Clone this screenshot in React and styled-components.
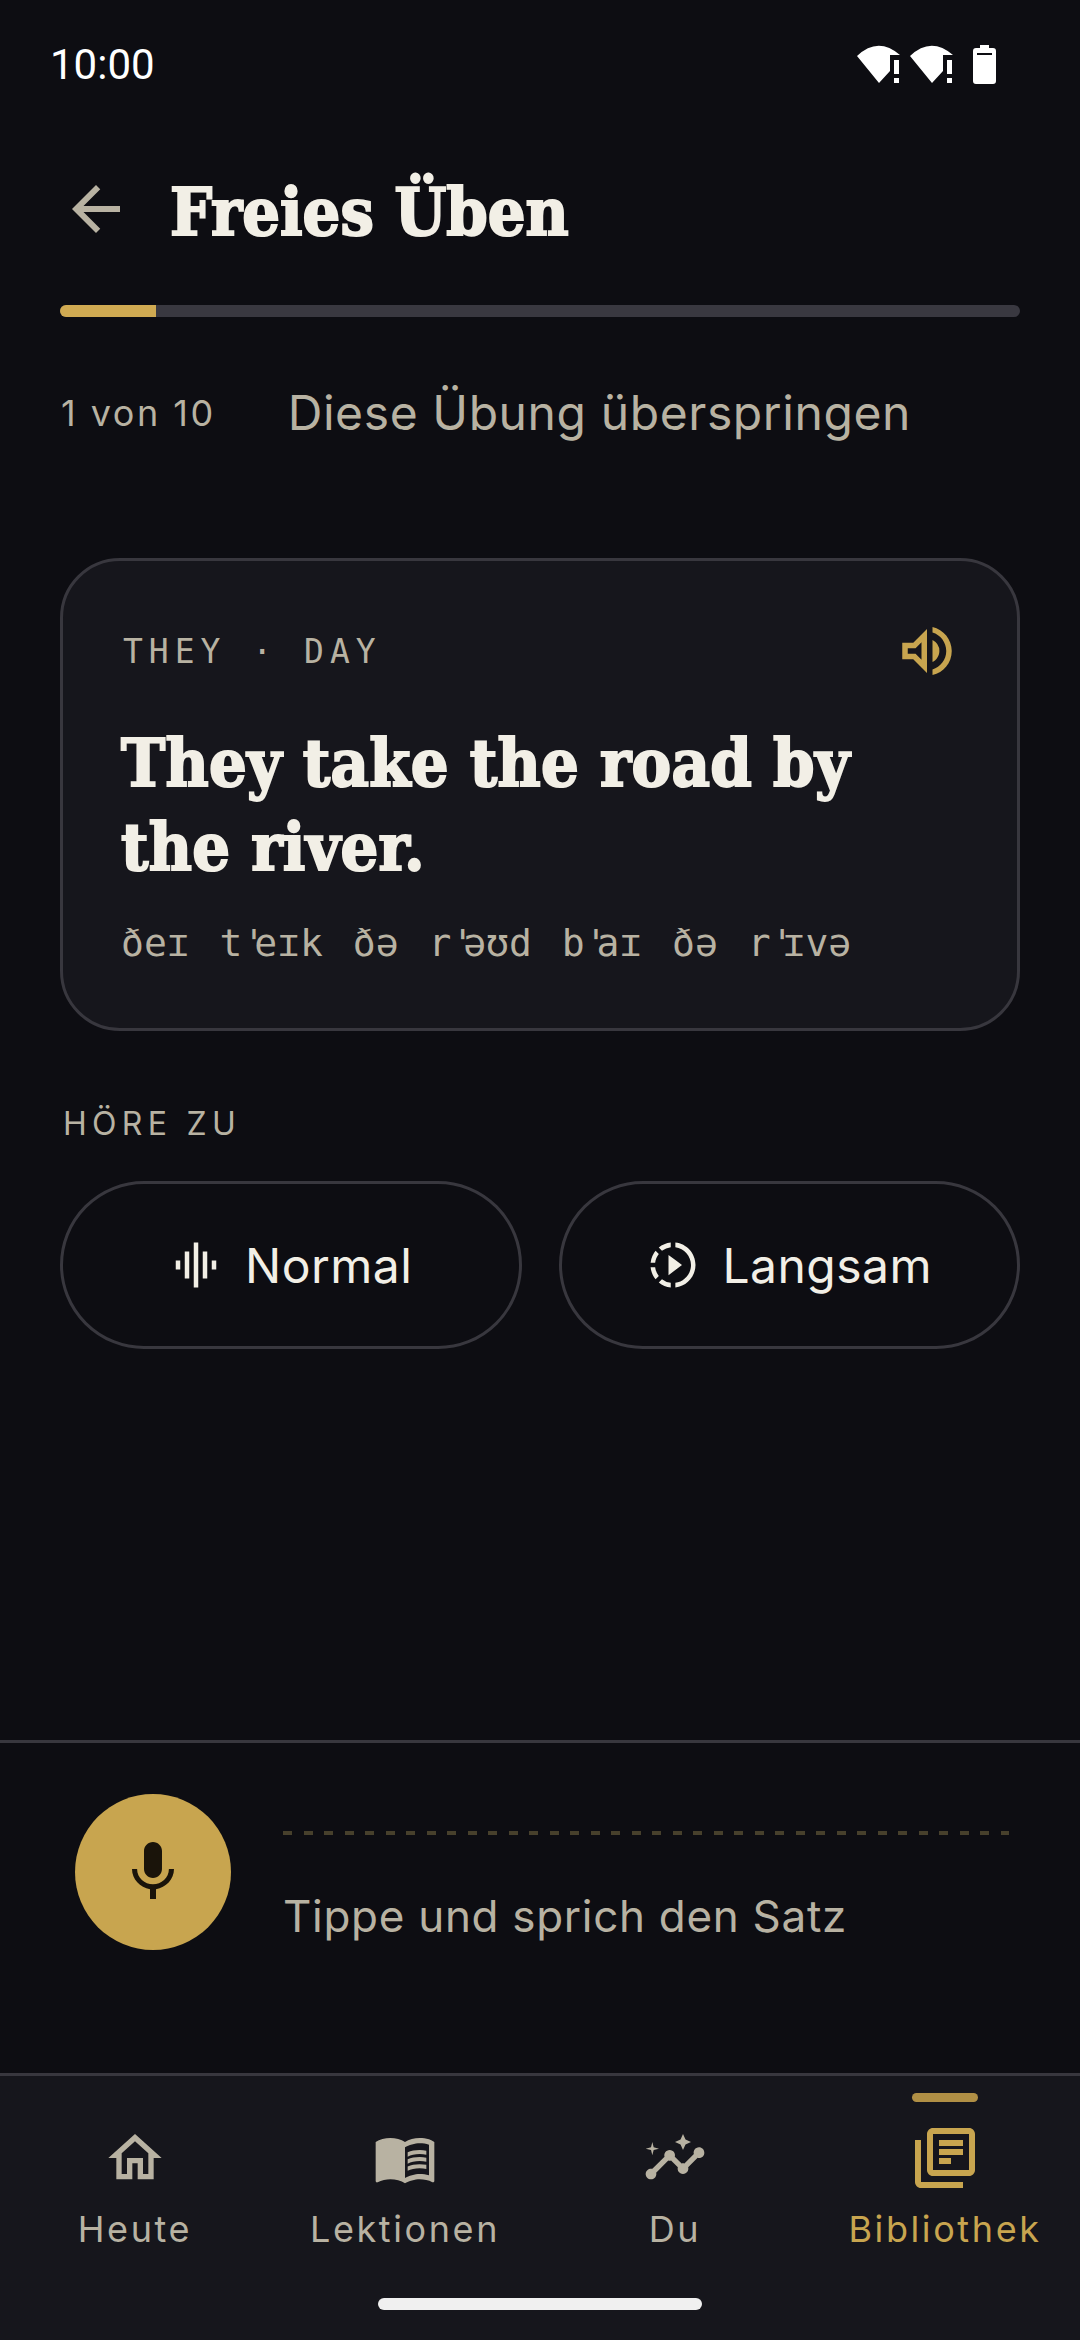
import React from 'react';
import styled, { createGlobalStyle } from 'styled-components';
import {
  MdArrowBack,
  MdGraphicEq,
  MdInsights,
  MdMenuBook,
  MdMic,
  MdOutlineHome,
  MdOutlineLibraryBooks,
  MdOutlineVolumeUp,
  MdSlowMotionVideo,
} from 'react-icons/md';

const GlobalStyle = createGlobalStyle`
  html, body {
    margin: 0;
    padding: 0;
    background: #0d0d12;
  }
  * { box-sizing: border-box; }
`;

const Page = styled.div`
  width: 1080px;
  height: 2340px;
  display: flex;
  flex-direction: column;
  background: #0d0d12;
  color: #f2efe6;
  font-family: Inter, "Noto Sans", sans-serif;
  overflow: hidden;
`;

const StatusBar = styled.div`
  height: 126px;
  padding: 2px 84px 0 50px;
  display: flex;
  align-items: center;
  justify-content: space-between;
  flex-shrink: 0;
`;

const Clock = styled.span`
  font-family: Roboto, sans-serif;
  font-size: 42px;
  color: #fff;
`;

const StatusIcons = styled.div`
  display: flex;
  align-items: center;
  gap: 9px;

  svg:last-child {
    margin-left: 10px;
  }
`;

const Main = styled.main`
  flex: 1;
  min-height: 0;
  padding: 0 60px;
  display: flex;
  flex-direction: column;
`;

const Header = styled.header`
  height: 84px;
  display: flex;
  align-items: center;
  gap: 38px;
  margin-top: 41px;
`;

const BackIcon = styled(MdArrowBack)`
  font-size: 72px;
  color: #b8b2a2;
  flex-shrink: 0;
`;

const Title = styled.h1`
  margin: 6px 0 0;
  font-family: "DejaVu Serif", serif;
  font-stretch: condensed;
  font-weight: 700;
  font-size: 66px;
  -webkit-text-stroke: 2px #f2efe6;
  color: #f2efe6;
`;

const Track = styled.div`
  height: 12px;
  margin-top: 54px;
  border-radius: 6px;
  background: #393840;
  overflow: hidden;
`;

const Fill = styled.div`
  height: 100%;
  background: #d0aa52;
`;

const ProgressRow = styled.div`
  display: flex;
  align-items: center;
  margin-top: 66px;
`;

const Counter = styled.span`
  font-size: 36px;
  letter-spacing: 2.5px;
  color: #b8b2a2;
  margin: 0 72px 0 1px;
`;

const SkipLink = styled.span`
  font-size: 48px;
  letter-spacing: 0.6px;
  color: #b8b2a2;
`;

const Card = styled.section`
  margin-top: 116px;
  height: 473px;
  padding: 60px 57px 0 60px;
  border: 3px solid #38373e;
  border-radius: 60px;
  background: #16161c;
`;

const CardTop = styled.div`
  display: flex;
  align-items: center;
  justify-content: space-between;
  height: 66px;
  margin-top: -3px;
`;

const Mono = styled.span`
  font-family: "DejaVu Sans Mono", "Liberation Mono", monospace;
  color: #b8b2a2;
`;

const WordPair = styled(Mono)`
  font-size: 33px;
  letter-spacing: 6px;
  white-space: pre;
`;

const SoundIcon = styled(MdOutlineVolumeUp)`
  font-size: 66px;
  color: #c8a54f;
`;

const Sentence = styled.h2`
  margin: 37px 0 0 -2px;
  font-family: "DejaVu Serif", serif;
  font-stretch: condensed;
  font-weight: 700;
  font-size: 66px;
  letter-spacing: 0.3px;
  line-height: 84px;
  -webkit-text-stroke: 2px #f2efe6;
  color: #f2efe6;
`;

const Phonetic = styled(Mono)`
  display: block;
  margin: 32px 0 0 -2px;
  font-size: 38px;
  word-spacing: 7px;
  white-space: pre;
`;

const Stress = styled.span`
  letter-spacing: -11px;
`;

const SectionLabel = styled.div`
  margin: 73px 0 0 3px;
  font-size: 32px;
  letter-spacing: 5.3px;
  color: #b8b2a2;
`;

const ListenRow = styled.div`
  display: grid;
  grid-template-columns: 1fr 1fr;
  gap: 37px;
  margin-top: 38px;
`;

const ListenButton = styled.button`
  height: 168px;
  display: flex;
  align-items: center;
  justify-content: center;
  gap: 22px;
  border: 3px solid #38373e;
  border-radius: 84px;
  background: transparent;
  color: #f2efe6;
  font-family: inherit;
  font-size: 48px;
  letter-spacing: 0.5px;
  padding: 0;
`;

const SpeakPanel = styled.section`
  height: 336px;
  flex-shrink: 0;
  border-top: 3px solid #38373e;
  border-bottom: 3px solid #38373e;
  padding: 51px 71px 0 75px;
  display: flex;
  align-items: flex-start;
  gap: 52px;
`;

const MicButton = styled.div`
  width: 156px;
  height: 156px;
  border-radius: 50%;
  background: #c8a54f;
  color: #1a140a;
  display: flex;
  align-items: center;
  justify-content: center;
  flex-shrink: 0;
`;

const SpeakBody = styled.div`
  flex: 1;
  padding-top: 37px;
`;

const DashLine = styled.div`
  height: 4px;
  background: repeating-linear-gradient(90deg, #47402c 0 9px, transparent 9px 20.5px);
`;

const Prompt = styled.div`
  margin-top: 54px;
  font-size: 44px;
  letter-spacing: 0.7px;
  color: #b8b2a2;
`;

const BottomNav = styled.nav`
  flex: 0 0 264px;
  background: #16161c;
  position: relative;
  display: grid;
  grid-template-columns: repeat(4, 1fr);
`;

const NavItem = styled.div`
  position: relative;
  display: flex;
  flex-direction: column;
  align-items: center;
  padding-top: 46px;
  color: ${(p) => (p.$active ? '#c8a54f' : '#b8b2a2')};
`;

const NavIcon = styled.div`
  height: 72px;
  display: flex;
  align-items: center;
  justify-content: center;
`;

const NavLabel = styled.span`
  margin-top: 13px;
  font-size: 36px;
  letter-spacing: 2.6px;
`;

const ActiveBar = styled.div`
  position: absolute;
  top: 17px;
  left: 50%;
  width: 66px;
  height: 9px;
  margin-left: -33px;
  border-radius: 5px;
  background: #b08f45;
`;

const HomeIndicator = styled.div`
  position: absolute;
  left: 378px;
  bottom: 30px;
  width: 324px;
  height: 12px;
  border-radius: 6px;
  background: #f0f0f0;
`;

const WifiAlert = () => (
  <svg width="44" height="39" viewBox="0 0 44 39" fill="#fff">
    <path d="M22 38 L0 11 Q21 -9 43 10 L33 10 L33 26 Z" />
    <rect x="37" y="15" width="5" height="14" />
    <rect x="37" y="33" width="5" height="5" />
  </svg>
);

const Battery = () => (
  <svg width="23" height="39" viewBox="0 0 23 39">
    <path d="M7 0h9v3h4a3 3 0 0 1 3 3v30a3 3 0 0 1-3 3H3a3 3 0 0 1-3-3V6a3 3 0 0 1 3-3h4z" fill="#fff" />
    <rect x="4" y="8" width="15" height="2" fill="#0d0d12" />
  </svg>
);

const tabs = [
  { label: 'Heute', Icon: MdOutlineHome, size: 64 },
  { label: 'Lektionen', Icon: MdMenuBook, size: 64 },
  { label: 'Du', Icon: MdInsights, size: 64 },
  { label: 'Bibliothek', Icon: MdOutlineLibraryBooks, size: 72, active: true },
];

export default function App() {
  return (
    <Page>
      <GlobalStyle />
      <StatusBar>
        <Clock>10:00</Clock>
        <StatusIcons>
          <WifiAlert />
          <WifiAlert />
          <Battery />
        </StatusIcons>
      </StatusBar>
      <Main>
        <Header>
          <BackIcon />
          <Title>Freies Üben</Title>
        </Header>
        <Track>
          <Fill style={{ width: '10%' }} />
        </Track>
        <ProgressRow>
          <Counter>1 von 10</Counter>
          <SkipLink>Diese Übung überspringen</SkipLink>
        </ProgressRow>
        <Card>
          <CardTop>
            <WordPair>THEY · DAY</WordPair>
            <SoundIcon />
          </CardTop>
          <Sentence>They take the road by the river.</Sentence>
          <Phonetic>
            ðeɪ t<Stress>'</Stress>eɪk ðə r<Stress>'</Stress>əʊd b<Stress>'</Stress>aɪ ðə r<Stress>'</Stress>ɪvə
          </Phonetic>
        </Card>
        <SectionLabel>HÖRE ZU</SectionLabel>
        <ListenRow>
          <ListenButton>
            <MdGraphicEq size={54} />
            Normal
          </ListenButton>
          <ListenButton>
            <MdSlowMotionVideo size={54} />
            Langsam
          </ListenButton>
        </ListenRow>
      </Main>
      <SpeakPanel>
        <MicButton>
          <MdMic size={72} />
        </MicButton>
        <SpeakBody>
          <DashLine />
          <Prompt>Tippe und sprich den Satz</Prompt>
        </SpeakBody>
      </SpeakPanel>
      <BottomNav>
        {tabs.map(({ label, Icon, size, active }) => (
          <NavItem key={label} $active={active}>
            {active && <ActiveBar />}
            <NavIcon>
              <Icon size={size} />
            </NavIcon>
            <NavLabel>{label}</NavLabel>
          </NavItem>
        ))}
        <HomeIndicator />
      </BottomNav>
    </Page>
  );
}
